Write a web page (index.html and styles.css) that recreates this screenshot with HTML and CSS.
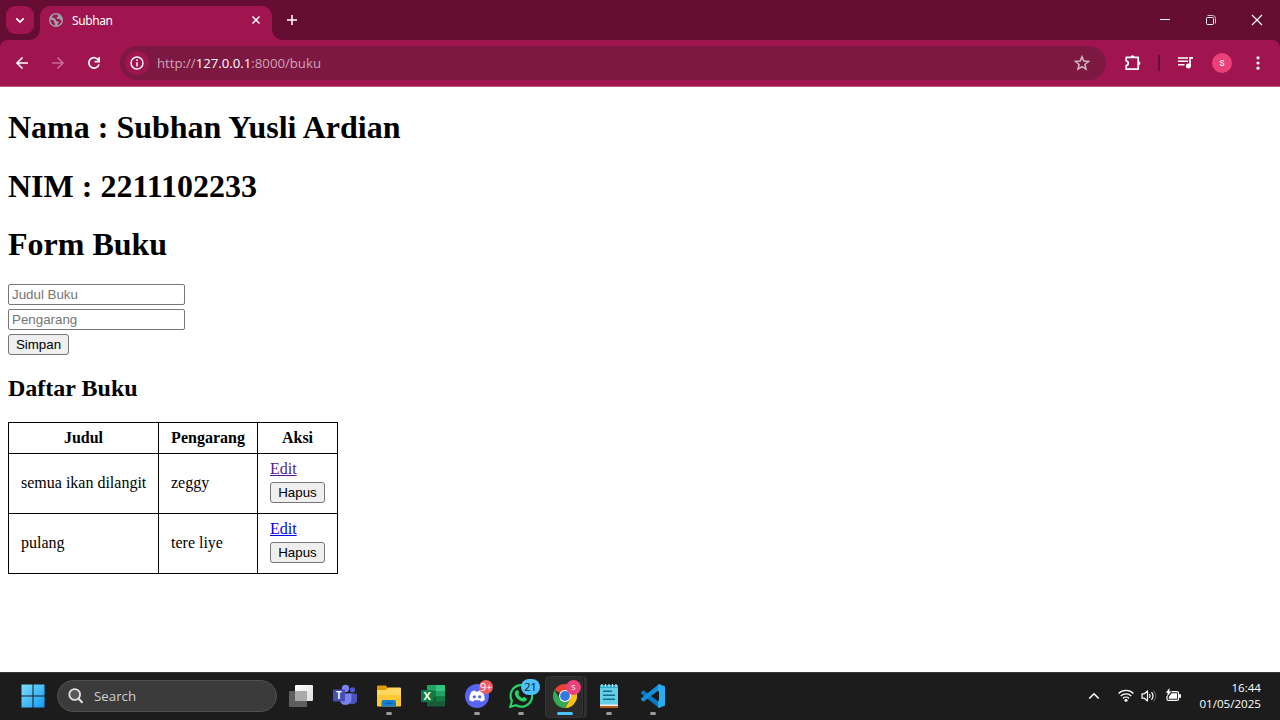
FILE: index.html
```html
<!DOCTYPE html>
<html lang="id">
<head>
<meta charset="utf-8">
<title>Subhan</title>
<link rel="stylesheet" href="styles.css">
</head>
<body>
<header class="tabstrip">
  <button class="tab-search" aria-label="Search tabs"><svg width="28" height="28" viewBox="0 0 28 28"><path d="M10.300 12.300 14 16l3.700-3.700" fill="none" stroke="#fff" stroke-width="1.700"/></svg></button>
  <div class="tab">
    <svg width="14" height="14" viewBox="0 0 14 14"><circle cx="7" cy="7" r="7" fill="#9aa0a6"/><path d="M7.500 1.500C5 1.300 3.300 2.800 3 4.200c1 1 2.300.6 3.200 1.500.9 1 .2 2.100 1.500 2.500 1 .3 1.600-.2 1.900.7.300 1-.9 1.300-.9 3.400 2.300-.7 3.800-2.600 3.900-5-1.300.1-1.500-1-2.800-1.300-1-.2-2.200.1-2.300-.9 0-1.200 1.700-1 1.600-2.200-.1-.7-.8-1-1.600-1.400M1.400 6.700c1.200.2 2.600.2 3.300 1.200.6 1 .1 1.500.9 2.100.5.500.4 1.200.3 2.400C3.200 11.800 1.400 9.500 1.400 6.700" fill="#a0154f"/></svg>
    <span class="tab-title">Subhan</span>
    <svg class="tab-close" width="10" height="10" viewBox="0 0 10 10"><path d="m1.500 1.500 7 7m0-7-7 7" stroke="#fff" stroke-width="1.500"/></svg>
  </div>
  <svg class="new-tab" width="12" height="12" viewBox="0 0 12 12"><path d="M6 1v10M1 6h10" stroke="#fff" stroke-width="1.500"/></svg>
  <div class="window-buttons">
    <svg width="46" height="40" viewBox="0 0 46 40"><path d="M18 19.500h10" stroke="#fff"/></svg>
    <svg width="46" height="40" viewBox="0 0 46 40"><path d="M19.500 15.500h5a3 3 0 0 1 3 3v5" fill="none" stroke="#d9b9c8"/><rect x="18.500" y="17.500" width="7" height="7" rx="1" fill="none" stroke="#fff"/></svg>
    <svg width="46" height="40" viewBox="0 0 46 40"><path d="m18 15 10 10m0-10L18 25" stroke="#fff" stroke-width="1.150"/></svg>
  </div>
</header>
<nav class="toolbar">
  <svg class="tool" width="36" height="46" viewBox="0 0 36 46"><path d="M24 23H13m5.500-5.500L13 23l5.500 5.500" fill="none" stroke="#fff" stroke-width="1.600"/></svg>
  <svg class="tool" width="36" height="46" viewBox="0 0 36 46"><path d="M12 23h11m-5.500-5.500L23 23l-5.500 5.500" fill="none" stroke="#c86a93" stroke-width="1.600"/></svg>
  <svg class="tool" width="36" height="46" viewBox="0 0 36 46"><path d="M22.500 20.200A5.200 5.200 0 1 0 23 24.500" fill="none" stroke="#fff" stroke-width="1.700"/><path d="M24 17v5.500h-5.400v-1.700h3.700V17z" fill="#fff"/></svg>
  <div class="address">
    <span class="site-info"><svg width="14" height="14" viewBox="0 0 14 14"><circle cx="7" cy="7" r="6" fill="none" stroke="#fff" stroke-width="1.400"/><path d="M7 6.200v4.200" stroke="#fff" stroke-width="1.500"/><circle cx="7" cy="4.200" r=".9" fill="#fff"/></svg></span>
    <span class="url">http://<b>127.0.0.1</b>:8000/buku</span>
    <svg class="star" width="16" height="16" viewBox="0 0 16 16"><path d="m8 1.800 1.800 4.300 4.700.4-3.600 3 1.100 4.600L8 11.600l-4 2.500 1.100-4.600-3.600-3 4.700-.4z" fill="none" stroke="#cfb3c0" stroke-width="1.600"/></svg>
  </div>
  <div class="tools-right">
    <svg width="20" height="20" viewBox="0 0 20 20"><path d="M3.200 4.400h12v11.800h-12v-3.500q2-.4 2-2.400t-2-2.400z" fill="none" stroke="#fff" stroke-width="1.700" stroke-linejoin="round"/><path d="M7.700 4a1.800 1.800 0 0 1 3.600 0M15.500 8.300a1.900 1.900 0 0 1 0 3.800" fill="#fff"/></svg>
    <span class="divider"></span>
    <svg width="18" height="18" viewBox="0 0 18 18"><path d="M1 3.900h10M1 7.300h10M1 10.700h6.500" stroke="#fff" stroke-width="1.500"/><path d="M13 12V3.900h3" fill="none" stroke="#fff" stroke-width="1.700"/><circle cx="11.400" cy="12" r="2.500" fill="#fff"/></svg>
    <span class="profile">s</span>
    <svg width="6" height="18" viewBox="0 0 6 18"><g fill="#fff"><circle cx="3" cy="3.800" r="1.600"/><circle cx="3" cy="9" r="1.600"/><circle cx="3" cy="14.200" r="1.600"/></g></svg>
  </div>
</nav>
<main class="page">
  <h1 class="heading">Nama : Subhan Yusli Ardian</h1>
  <h1 class="heading">NIM : 2211102233</h1>
  <h1 class="heading">Form Buku</h1>
  <form class="book-form">
    <input class="field" placeholder="Judul Buku">
    <input class="field" placeholder="Pengarang">
    <button class="btn save" type="button">Simpan</button>
  </form>
  <h2 class="subheading">Daftar Buku</h2>
  <table class="books">
    <colgroup><col class="col-title"><col class="col-author"><col class="col-action"></colgroup>
    <tr class="head-row"><th>Judul</th><th>Pengarang</th><th>Aksi</th></tr>
    <tr><td>semua ikan dilangit</td><td>zeggy</td><td><div class="actions"><a class="visited" href="#">Edit</a><button class="btn" type="button">Hapus</button></div></td></tr>
    <tr><td>pulang</td><td>tere liye</td><td><div class="actions"><a class="link" href="#">Edit</a><button class="btn" type="button">Hapus</button></div></td></tr>
  </table>
</main>
<footer class="taskbar">
  <div class="app start"><svg width="24" height="24" viewBox="0 0 24 24"><defs><linearGradient id="win" x1="0" y1="0" x2="1" y2="1"><stop stop-color="#7be0fb"/><stop offset="1" stop-color="#1399f5"/></linearGradient></defs><path d="M.5.5h11v11H.5zM12.500.5h11v11h-11zM.5 12.500h11v11H.5zM12.500 12.500h11v11h-11z" fill="url(#win)"/></svg></div>
  <div class="search"><svg width="16" height="16" viewBox="0 0 16 16"><circle cx="6.700" cy="6.500" r="5.400" fill="#5a5a5a" stroke="#e2e2e2" stroke-width="1.800"/><path d="m10.700 10.700 3.300 3.600" stroke="#e2e2e2" stroke-width="2" stroke-linecap="round"/></svg><span>Search</span></div>
  <div class="app"><svg width="24" height="24" viewBox="0 0 24 24"><defs><linearGradient id="tw" x2="1" y2="1"><stop stop-color="#fff"/><stop offset="1" stop-color="#ddd"/></linearGradient></defs><rect x="6" y="1" width="18" height="16" rx="1" fill="url(#tw)"/><rect y="7" width="18" height="16" rx="1" fill="#5e5e5e"/><path d="M6 7h12v10H6z" fill="#aaa"/></svg></div>
  <div class="app"><svg width="24" height="24" viewBox="0 0 24 24"><circle cx="19.500" cy="5.800" r="2.600" fill="#5059c9"/><path d="M15 9.500h8q1 0 1 1V15a4.500 4.500 0 0 1-8 3.500z" fill="#4b53bc"/><circle cx="12.500" cy="4.500" r="3.700" fill="#7b83eb"/><path d="M7 9.500h11.500V16A6 6 0 0 1 7 17z" fill="#7b83eb"/><rect y="5.500" width="12" height="12" rx="1" fill="#464eb8"/><text x="6" y="15" class="app-letter small">T</text></svg></div>
  <div class="app running"><svg width="24" height="24" viewBox="0 0 24 24"><path d="M0 2.500q0-1 1-1h8l2 3v3H0z" fill="#df9a00"/><path d="M0 6h8.500L11 3.500h12q1 0 1 1V22H0z" fill="#ffd75e"/><path d="M0 11h24v10.500q0 1-1 1H1q-1 0-1-1z" fill="#ffc936"/><path d="M4.500 22.500V18q0-2 2-2H17q2 0 2 2v4.500z" fill="#1680d0"/><path d="M8 19.500h7.500" stroke="#0b63ab" stroke-width="1.200"/></svg></div>
  <div class="app"><svg width="24" height="24" viewBox="0 0 24 24"><rect x="6" y="1" width="18" height="21.500" rx="1" fill="#185c37"/><path d="M6 2q0-1 1-1h8v6H6z" fill="#21a366"/><path d="M15 1h8q1 0 1 1v5h-9z" fill="#33c481"/><path d="M6 7h9v5.500H6z" fill="#107c41"/><path d="M15 7h9v5.500h-9z" fill="#21a366"/><path d="M15 12.500h9v5h-9z" fill="#107c41"/><rect y="6" width="12.500" height="12" rx="1" fill="#107c41"/><text x="6.200" y="16" class="app-letter">X</text></svg></div>
  <div class="app running"><svg width="24" height="24" viewBox="0 0 24 24"><circle cx="12" cy="12" r="12" fill="#5865f2"/><path d="M6.500 7.600q2-1.100 3.500-1.200l.6 1.100h2.800l.6-1.100q1.500.1 3.500 1.200Q20 11.500 19.700 16q-1.800 1.400-3.800 1.700l-1-1.500H9.100l-1 1.500q-2-.3-3.800-1.700Q4 11.500 6.500 7.600z" fill="#fff"/><circle cx="9.300" cy="12.800" r="1.600" fill="#5865f2"/><circle cx="14.700" cy="12.800" r="1.600" fill="#5865f2"/></svg><span class="badge red">9+</span></div>
  <div class="app running"><svg width="24" height="24" viewBox="0 0 24 24"><path d="M1.300 22.800 2.900 17A10.800 10.800 0 1 1 7 21.200z" fill="#1c1c1c" stroke="#25d366" stroke-width="2.200"/><path d="M8 6.200c.7-.3 1.100 0 1.300.5l.8 1.900c.2.600-.4 1.100-.8 1.600.9 1.900 2.400 3.200 4.300 4 .5-.5 1-1.400 1.600-1.100l2.200 1.100c.7.400.3 1.600-.1 2.200-1 1.300-3 1.500-4.800.8-3.300-1.200-6-4-6.600-6.700C5.600 8.500 6.600 6.700 8 6.200" fill="#25d366"/></svg><span class="badge blue">21</span></div>
  <div class="app chrome"><svg width="24" height="24" viewBox="0 0 24 24"><path d="M12 12 1.600 6A12 12 0 0 1 22.400 6z" fill="#ea4335"/><path d="M22.400 6A12 12 0 0 1 12 24l5.200-9L12 6z" fill="#fbc116"/><path d="M1.600 6A12 12 0 0 0 12 24l5.200-9H6.800z" fill="#34a853"/><circle cx="12" cy="12" r="6" fill="#fff"/><circle cx="12" cy="12" r="4.900" fill="#3478e5"/></svg><span class="badge pink">s</span></div>
  <div class="app running"><svg width="24" height="24" viewBox="0 0 24 24"><path d="M3 21h18v2.500q0 .5-.5.500h-17q-.5 0-.5-.500z" fill="#b75c18"/><path d="M3 19h18v3H3z" fill="#eee"/><path d="M3 2h18v18.500H3z" fill="#65cfe8"/><path d="M3 1h18v3H3z" fill="#35a9c7"/><path d="M5 0v3m3.500-3v3M12 0v3m3.500-3v3M19 0v3" stroke="#b4f0ff" stroke-width="1.200"/><path d="M6 7.200h9M6 11.200h12M6 15.200h12" stroke="#146b8b" stroke-width="1.600"/></svg></div>
  <div class="app running"><svg width="24" height="24" viewBox="0 0 24 24"><path d="M18 24v-6L2.500 6.300 0 8.300v1.300z" fill="#0879bf"/><path d="M18 0v6L2.500 17.700 0 15.700v-1.300z" fill="#168dd8"/><path d="m18 0 6 2.500v19L18 24l-1-1V1z" fill="#2aabf2"/><path d="m18 7-6.500 5 6.500 5z" fill="#1c1c1c"/></svg></div>
  <div class="tray">
    <svg width="12" height="8" viewBox="0 0 12 8"><path d="m1.300 6.500 4.700-4.700 4.700 4.700" fill="none" stroke="#fff" stroke-width="1.600"/></svg>
    <svg class="wifi" width="16" height="14" viewBox="0 0 16 14"><g fill="none" stroke="#fff" stroke-width="1.200"><path d="M.6 4.500a10.500 10.500 0 0 1 14.800 0M2.700 7a7.500 7.500 0 0 1 10.600 0M4.900 9.500a4.400 4.400 0 0 1 6.200 0"/></g><circle cx="8" cy="11.300" r="1.500" fill="#fff"/></svg>
    <svg class="sound" width="17" height="14" viewBox="0 0 17 14"><path d="M1 4.800h2.300L6.500 2v10L3.300 9.200H1z" fill="none" stroke="#fff" stroke-width="1.200" stroke-linejoin="round"/><path d="M8.500 5q1.400 2 0 4M10.500 3.200q3 3.800 0 7.600" fill="none" stroke="#fff" stroke-width="1.200"/><path d="M12.500 1.500q4.500 5.500 0 11" fill="none" stroke="#555" stroke-width="1.200"/></svg>
    <svg class="battery" width="17" height="15" viewBox="0 0 17 15"><path d="M6.500 3.600H12q1.500 0 1.500 1.500v5.800q0 1.500-1.500 1.500H3.500Q2 12.400 2 10.900V8" fill="none" stroke="#fff" stroke-width="1.200"/><path d="M6.500 5.200H12v5.500H3.800V9z" fill="#fff"/><path d="M14 6.200h2v3.500h-2zM4.500 0 .8 4.800h2L2 8.800l4.400-5.200h-2z" fill="#fff"/></svg>
    <div class="clock"><span>16:44</span><span>01/05/2025</span></div>
  </div>
</footer>
</body>
</html>
```
FILE: styles.css
```css
* { box-sizing: border-box; }
body { margin: 0; width: 1280px; height: 720px; overflow: hidden; display: flex; flex-direction: column; background: linear-gradient(#650d32 60px, #fff 60px); font-family: "Open Sans", sans-serif; }
svg { display: block; flex: none; }

.tabstrip { height: 40px; flex: none; display: flex; align-items: center; padding-left: 6px; background: #650d32; }
.tab-search { width: 28px; height: 28px; padding: 0; border: 0; border-radius: 9px; background: #a0154f; }
.tab { position: relative; align-self: flex-end; width: 232px; height: 34px; margin-left: 6px; padding: 0 11px 6px 9px; display: flex; align-items: center; border-radius: 10px 10px 0 0; background: #a0154f; color: #fff; font-family: "Noto Sans", sans-serif; font-size: 12px; }
.tab::before, .tab::after { content: ""; position: absolute; bottom: 0; width: 10px; height: 10px; }
.tab::before { right: 100%; background: radial-gradient(circle at 0 0, transparent 9.5px, #a0154f 10px); }
.tab::after { left: 100%; background: radial-gradient(circle at 100% 0, transparent 9.5px, #a0154f 10px); }
.tab-title { margin-left: 9px; padding-top: 1px; letter-spacing: -.4px; }
.tab-close { margin-left: auto; }
.new-tab { margin-left: 14px; }
.window-buttons { display: flex; margin-left: auto; }

.toolbar { height: 47px; flex: none; display: flex; align-items: center; padding-left: 4px; background: #a0154f; border-bottom: 1px solid #bd5b84; border-radius: 8px 8px 0 0; }
.address { width: 986px; height: 34px; margin-left: 8px; display: flex; align-items: center; padding: 0 16px 0 5px; border-radius: 17px; background: #7d1842; }
.site-info { width: 24px; height: 24px; display: grid; place-items: center; border-radius: 50%; background: #a0154f; }
.url { margin-left: 8px; color: #cfa3b7; font-size: 13.2px; line-height: 20px; }
.url b { font-weight: 400; color: #fff; }
.star { margin-left: auto; }
.tools-right { flex: 1; display: flex; align-items: center; padding-left: 17px; }
.divider { width: 2px; height: 16px; margin: 0 17px 0 15px; background: #650d32; }
.profile { width: 20px; height: 20px; margin: 0 23px 0 17px; border-radius: 50%; background: #ec407a; color: #fff; text-align: center; font: 10px/19px Roboto, sans-serif; }

.page { flex: 1; min-height: 0; padding: 22px 8px 0; background: #fff; color: #000; font: 16px/18px "Liberation Serif", serif; }
.heading { margin: 0 0 21.5px; font-size: 32px; line-height: 37px; }
.book-form { display: flex; flex-direction: column; align-items: flex-start; gap: 4px; margin-top: -1px; }
.field { width: 177px; height: 21px; padding: 1px 3px; border: 1px solid #767676; border-radius: 2px; font: 13.333px "Liberation Sans", sans-serif; }
.field::placeholder { color: #757575; }
.btn { height: 21px; padding: 0; border: 1px solid #767676; border-radius: 3px; background: #efefef; color: #000; font: 13.333px/17px "Liberation Sans", sans-serif; width: 55px; }
.save { width: 61px; }
.subheading { margin: 20px 0; font-size: 24px; line-height: 27px; }
.books { width: 330px; table-layout: fixed; border-collapse: collapse; }
.col-title { width: 150px; }
.col-author { width: 99px; }
.col-action { width: 80px; }
.books th, .books td { height: 60px; padding: 0 12px; border: 1px solid #000; white-space: nowrap; }
.books .head-row th { height: 31px; }
.actions { display: flex; flex-direction: column; align-items: flex-start; gap: 4px; margin-top: -4px; }
.visited { color: #551a8b; }
.link { color: #00e; }

.taskbar { height: 48px; flex: none; display: flex; padding-left: 10px; background: #1c1c1c; border-top: 1px solid #393939; }
.app { position: relative; width: 44px; height: 47px; padding-bottom: 1px; display: grid; place-items: center; }
.start { padding-left: 1px; }
.running::after, .chrome::after { content: ""; position: absolute; left: 19px; top: 39px; width: 6px; height: 3px; border-radius: 2px; background: #9a9a9a; }
.chrome { isolation: isolate; }
.chrome::before { content: ""; position: absolute; z-index: -1; left: 2px; top: 3px; width: 36px; height: 40px; border: 1px solid #353535; border-radius: 4px; background: #2b2b2b; box-shadow: 1px 0 0 #1c1c1c, 4px 0 0 #303030; }
.chrome::after { left: 14px; width: 16px; background: #4cc2ff; }
.app-letter { fill: #fff; font: bold 11px "Open Sans", sans-serif; text-anchor: middle; }
.small { font-size: 10px; }
.badge { position: absolute; top: 7px; height: 14px; border-radius: 8px; text-align: center; color: #fff; font: 11px/14px "Open Sans", sans-serif; }
.red { left: 24px; width: 14px; background: #ed5c5c; letter-spacing: -.4px; }
.blue { left: 22px; top: 6px; width: 19px; height: 16px; line-height: 16px; background: #4cc2ff; color: #111; }
.pink { left: 23px; width: 15px; height: 15px; background: #ec407a; font-size: 9px; }
.search { width: 220px; height: 32px; margin: 7px 2px 0 3px; padding-left: 10px; display: flex; align-items: center; gap: 10px; border: 1px solid #505050; border-radius: 16px; background: #3b3b3b; color: #d0d0d0; font-size: 13.3px; }
.tray { display: flex; align-items: center; margin-left: auto; padding: 0 19px 2px 0; color: #fff; }
.wifi { margin-left: 18px; }
.sound { margin-left: 7px; }
.battery { margin-left: 7px; }
.clock { width: 79px; display: flex; flex-direction: column; align-items: flex-end; font-size: 11.6px; line-height: 16px; }
```
